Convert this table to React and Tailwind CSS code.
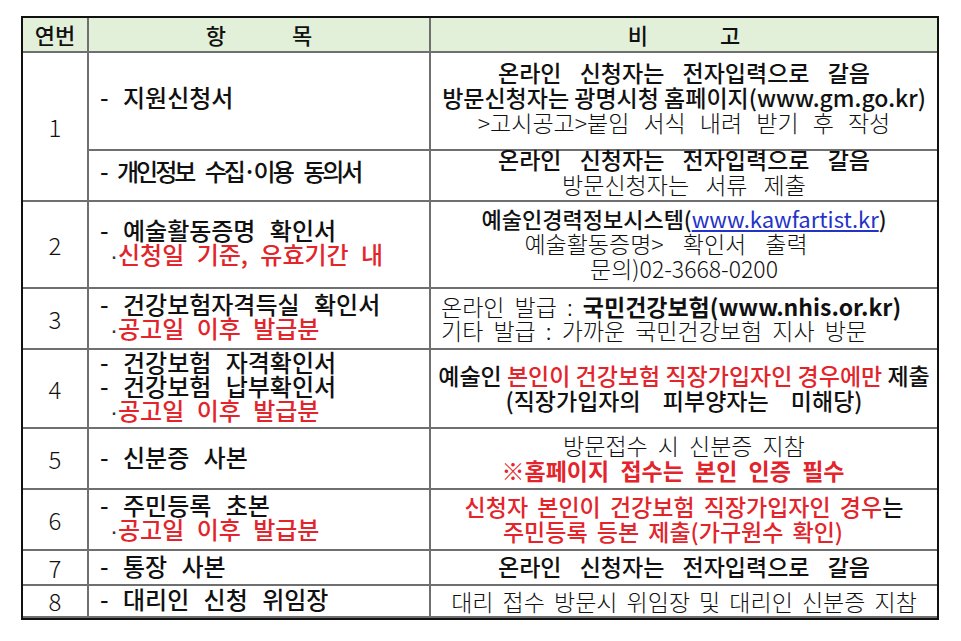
import React from "react";

const RED = "text-[#e3242b]";

const Cell = ({ className = "", children }) => (
  <div className={`flex flex-col justify-center whitespace-nowrap border-[#6f6f6f] ${className}`}>
    {children}
  </div>
);

const Num = ({ children, className = "" }) => (
  <Cell className={`items-center border-r-2 border-b-2 text-[24px] font-light ${className}`}>
    {children}
  </Cell>
);

const Item = ({ children, className = "" }) => (
  <Cell className={`border-r-2 border-b-2 pl-[11px] pb-[4px] text-[24px] leading-[24px] font-medium [word-spacing:9px] ${className}`}>
    {children}
  </Cell>
);

const Note = ({ children, className = "" }) => (
  <Cell className={`items-center border-b-2 text-center text-[23px] leading-[25px] ${className}`}>
    {children}
  </Cell>
);

const Sub = ({ children }) => (
  <div className={`pl-[10px] font-medium [word-spacing:7px] ${RED}`}>
    <span className="font-['Liberation_Sans',sans-serif] text-[#333]">·</span>
    {children}
  </div>
);

export default function App() {
  return (
    <div className="min-h-[641px] bg-white pt-[16px] pl-[21px] font-['Noto_Sans_CJK_KR',sans-serif] text-[#111]">
      <div className="grid w-[918px] grid-cols-[66px_342px_506px] grid-rows-[35px_98px_51px_87px_61px_79px_61px_61px_35px_32px] border-2 border-[#111]">
        {/* header */}
        <Cell className="items-center border-r-2 border-b-2 bg-[#e2efd9] text-[22px] font-medium">
          연번
        </Cell>
        <Cell className="flex-row items-center justify-center gap-[66px] border-r-2 border-b-2 bg-[#e2efd9] text-[22px] font-medium">
          <span>항</span>
          <span>목</span>
        </Cell>
        <Cell className="flex-row items-center justify-center gap-[72px] border-b-2 bg-[#e2efd9] text-[22px] font-medium">
          <span>비</span>
          <span>고</span>
        </Cell>

        {/* 1 */}
        <Num className="row-span-2">1</Num>
        <Item className="pb-[8px]">- 지원신청서</Item>
        <Note className="pb-[8px]">
          <div className="font-medium [word-spacing:13px]">온라인 신청자는 전자입력으로 갈음</div>
          <div className="font-medium">방문신청자는 광명시청 홈페이지(www.gm.go.kr)</div>
          <div className="font-light [word-spacing:9px]">&gt;고시공고&gt;붙임 서식 내려 받기 후 작성</div>
        </Note>
        <Item className="pb-[10px] tracking-[-3px] [word-spacing:0px]">- 개인정보 수집·이용 동의서</Item>
        <Note className="pb-[8px]">
          <div className="font-medium [word-spacing:13px]">온라인 신청자는 전자입력으로 갈음</div>
          <div className="font-light [word-spacing:11px]">방문신청자는 서류 제출</div>
        </Note>

        {/* 2 */}
        <Num>2</Num>
        <Item>
          <div>- 예술활동증명 확인서</div>
          <Sub>신청일 기준, 유효기간 내</Sub>
        </Item>
        <Note className="pb-[2px]">
          <div className="text-[22px] font-medium">
            예술인경력정보시스템(
            <span className="font-normal text-[#2432c8] underline underline-offset-2">www.kawfartist.kr</span>)
          </div>
          <div className="pr-[36px] font-light [word-spacing:14px]">예술활동증명&gt; 확인서 출력</div>
          <div className="font-light">문의)02-3668-0200</div>
        </Note>

        {/* 3 */}
        <Num>3</Num>
        <Item>
          <div>- 건강보험자격득실 확인서</div>
          <Sub>공고일 이후 발급분</Sub>
        </Item>
        <Cell className="border-b-2 pl-[10px] pb-[2px] text-[23px] leading-[24px] font-light [word-spacing:5px]">
          <div>
            온라인 발급 : <span className="font-bold [word-spacing:0px]">국민건강보험(www.nhis.or.kr)</span>
          </div>
          <div>기타 발급 : 가까운 국민건강보험 지사 방문</div>
        </Cell>

        {/* 4 */}
        <Num>4</Num>
        <Item>
          <div>- 건강보험 자격확인서</div>
          <div>- 건강보험 납부확인서</div>
          <Sub>공고일 이후 발급분</Sub>
        </Item>
        <Note className="pb-[2px] text-[20px] leading-[24px] font-medium">
          <div className="[word-spacing:0px]">
            예술인 <span className={RED}>본인이 건강보험 직장가입자인 경우에만</span> 제출
          </div>
          <div className="[word-spacing:17px]">(직장가입자의 피부양자는 미해당)</div>
        </Note>

        {/* 5 */}
        <Num>5</Num>
        <Item>- 신분증 사본</Item>
        <Note className="pb-[2px] text-[22px] leading-[24px]">
          <div className="font-light [word-spacing:5px]">방문접수 시 신분증 지참</div>
          <div className={`pr-[22px] font-bold [word-spacing:6px] ${RED}`}>※홈페이지 접수는 본인 인증 필수</div>
        </Note>

        {/* 6 */}
        <Num>6</Num>
        <Item>
          <div>- 주민등록 초본</div>
          <Sub>공고일 이후 발급분</Sub>
        </Item>
        <Note className={`pb-[2px] text-[20px] leading-[24px] font-medium ${RED}`}>
          <div className="[word-spacing:4px]">
            신청자 본인이 건강보험 직장가입자인 경우<span className="text-[#111]">는</span>
          </div>
          <div className="pr-[22px] [word-spacing:4px]">주민등록 등본 제출(가구원수 확인)</div>
        </Note>

        {/* 7 */}
        <Num>7</Num>
        <Item>- 통장 사본</Item>
        <Note className="pb-[2px] font-medium [word-spacing:13px]">온라인 신청자는 전자입력으로 갈음</Note>

        {/* 8 */}
        <Num className="border-b-0">8</Num>
        <Item className="border-b-0 pb-[2px]">- 대리인 신청 위임장</Item>
        <Note className="border-b-0 text-[21px] font-light [word-spacing:4px]">대리 접수 방문시 위임장 및 대리인 신분증 지참</Note>
      </div>
    </div>
  );
}
